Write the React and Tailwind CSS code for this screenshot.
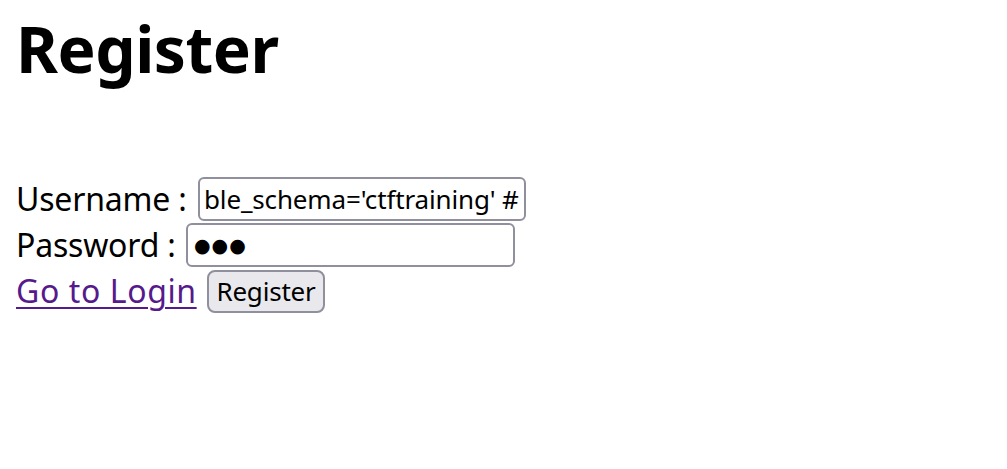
import React from "react";

export default function App() {
  return (
    <div className="min-h-[469px] w-[1007px] bg-white pl-[16px] text-black" style={{ fontFamily: '"Noto Sans", "Open Sans", sans-serif' }}>
      <h1 className="m-0 pt-[5px] text-[64px] font-bold leading-[88px] tracking-[-0.5px]">Register</h1>
      <div className="h-[83px]" />
      <div className="flex h-[46px] items-center text-[32px]">
        <span className="w-[182px] shrink-0 tracking-[-0.2px]">Username :</span>
        <input
          readOnly
          value="ble_schema='ctftraining' #"
          className="box-border h-[44px] w-[328px] rounded-[6px] border-2 border-[#8f8f9d] bg-white px-[4px] text-[26px] tracking-[-0.15px] text-black outline-none"
        />
      </div>
      <div className="flex h-[46px] items-center text-[32px]">
        <span className="w-[170px] shrink-0 tracking-[-0.2px]">Password :</span>
        <input
          readOnly
          value="●●●"
          className="box-border h-[44px] w-[329px] rounded-[6px] border-2 border-[#8f8f9d] bg-white px-[6px] text-[19px] tracking-[1px] text-black outline-none"
          style={{ fontFamily: '"DejaVu Sans", sans-serif' }}
        />
      </div>
      <div className="flex h-[46px] items-center text-[32px]">
        <div className="w-[191px] shrink-0">
          <a href="#" className="tracking-[0.6px] text-[#551a8b] underline decoration-[2px] underline-offset-[4px]">Go to Login</a>
        </div>
        <button className="box-border h-[43px] w-[118px] rounded-[8px] border-2 border-[#8f8f9d] bg-[#e9e9ed] text-[26px] tracking-[-0.2px] text-black">Register</button>
      </div>
    </div>
  );
}
